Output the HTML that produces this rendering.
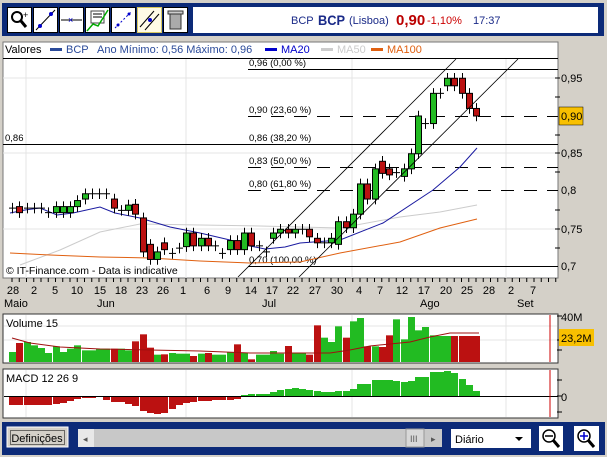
<!DOCTYPE html>
<html><head><meta charset="utf-8"><style>
body{margin:0;width:607px;height:457px;background:#d4d0c8;font-family:"Liberation Sans",sans-serif;overflow:hidden;position:relative}
.a{position:absolute}
</style></head><body>
<svg class="a" style="left:0;top:0" width="607" height="457" xmlns="http://www.w3.org/2000/svg" font-family="Liberation Sans, sans-serif" font-size="11">
<rect x="2" y="3" width="602" height="33" fill="#0c2a78"/>
<g fill="#fff" stroke="#000" stroke-width="1">
<rect x="7.5" y="7.5" width="24" height="25"/><rect x="33.5" y="7.5" width="24" height="25"/><rect x="59.5" y="7.5" width="24" height="25"/><rect x="85.5" y="7.5" width="24" height="25"/><rect x="111.5" y="7.5" width="24" height="25"/><rect x="137.5" y="7.5" width="24" height="25" fill="#fffbe6" stroke="#d8c860"/><rect x="163.5" y="7.5" width="24" height="25"/>
</g>
<g stroke="#000" fill="none">
<circle cx="17" cy="17" r="5" stroke-width="2"/><line x1="21" y1="21" x2="26" y2="27" stroke-width="3"/><text x="23" y="18" font-size="9" stroke="none" fill="#000">+</text>
<line x1="36" y1="30" x2="55" y2="10"/><circle cx="40" cy="26" r="1.5" fill="#00c" stroke="#00c"/><circle cx="51" cy="14" r="1.5" fill="#00c" stroke="#00c"/>
<line x1="61" y1="20" x2="82" y2="20"/><text x="68" y="23" font-size="9" fill="#00c" stroke="none">×</text>
<rect x="91" y="11" width="13" height="12" stroke="#444"/><line x1="93" y1="14" x2="102" y2="14"/><line x1="93" y1="17" x2="102" y2="17"/><polyline points="87,31 93,24 98,26 108,10" stroke="#0a0" stroke-width="1.5"/>
<line x1="115" y1="28" x2="132" y2="11" stroke-dasharray="2,2" stroke="#00c"/><circle cx="118" cy="25" r="1.5" fill="#00c" stroke="none"/><circle cx="129" cy="14" r="1.5" fill="#00c" stroke="none"/>
<line x1="140" y1="27" x2="154" y2="11"/><line x1="145" y1="30" x2="159" y2="14"/><circle cx="150" cy="20" r="2" fill="#00c" stroke="none"/>
<rect x="170" y="14" width="11" height="15" fill="#aaa" stroke="#333"/><rect x="168" y="11" width="15" height="3" fill="#ccc" stroke="#333"/>
</g>
<rect x="193" y="7" width="405" height="26" fill="#fff"/>
<text x="291" y="24" fill="#1a2a88">BCP</text>
<text x="318" y="25" fill="#1a2a88" font-size="14" font-weight="bold" textLength="27" lengthAdjust="spacingAndGlyphs">BCP</text>
<text x="349" y="24" fill="#1a2a88">(Lisboa)</text>
<text x="396" y="25" fill="#b00" font-size="15" font-weight="bold">0,90</text>
<text x="427" y="24" fill="#c00">-1,10%</text>
<text x="473" y="24" fill="#1a2a88">17:37</text>
<rect x="3" y="42" width="555" height="236" fill="#fff" stroke="#777"/>
<line x1="3" y1="58.5" x2="558" y2="58.5" stroke="#000"/>
<text x="5" y="53" fill="#000">Valores</text>
<rect x="50" y="48" width="12" height="3" fill="#2a4a9a"/><text x="66" y="53" fill="#2a4a9a">BCP</text>
<text x="97" y="53" fill="#2a4a9a">Ano Mínimo: 0,56 Máximo: 0,96</text>
<rect x="265" y="48" width="12" height="3" fill="#00c"/><text x="281" y="53" fill="#00c">MA20</text>
<rect x="321" y="48" width="12" height="3" fill="#ccc"/><text x="337" y="53" fill="#ccc">MA50</text>
<rect x="371" y="48" width="12" height="3" fill="#e06010"/><text x="387" y="53" fill="#e06010">MA100</text>
<g stroke="#e4e4e4"><line x1="3" y1="78" x2="558" y2="78"/><line x1="3" y1="153" x2="558" y2="153"/><line x1="3" y1="229" x2="558" y2="229"/><line x1="26" y1="59" x2="26" y2="278"/><line x1="186" y1="59" x2="186" y2="278"/><line x1="352" y1="59" x2="352" y2="278"/><line x1="506" y1="59" x2="506" y2="278"/></g>
<g stroke="#000" fill="none">
<line x1="248" y1="69.5" x2="558" y2="69.5"/>
<line x1="248" y1="116.5" x2="558" y2="116.5" stroke-dasharray="13,10"/>
<line x1="3" y1="144.5" x2="558" y2="144.5"/>
<line x1="248" y1="167.5" x2="558" y2="167.5" stroke-dasharray="13,10"/>
<line x1="248" y1="190.5" x2="558" y2="190.5" stroke-dasharray="13,10"/>
<line x1="248" y1="266.5" x2="558" y2="266.5"/>
</g>
<g font-size="9.5" fill="#000">
<text x="249" y="66">0,96 (0,00 %)</text>
<text x="249" y="113">0,90 (23,60 %)</text>
<text x="249" y="141">0,86 (38,20 %)</text>
<text x="5" y="141">0,86</text>
<text x="249" y="164">0,83 (50,00 %)</text>
<text x="249" y="187">0,80 (61,80 %)</text>
<text x="249" y="263">0,70 (100,00 %)</text>
</g>
<g fill="none" stroke-width="1">
<polyline stroke="#ccc" points="20,265 60,250 100,232 140,224 200,225 260,226 300,227 340,228 400,217 440,212 477,205"/>
<polyline stroke="#e06010" points="10,253 50,255 100,257 150,258 200,261 250,263 300,262 340,253 400,242 440,228 477,219"/>
<polyline stroke="#1a1aa0" points="10,213 25,210 40,208 57,215 73,213 100,207 115,213 140,218 170,227 200,233 230,240 250,246 265,249 285,247 300,243 340,240 383,223 433,190 460,167 477,148"/>
</g>
<g id="cd"></g>
<g stroke="#000" fill="none" stroke-width="0.8"><line x1="238" y1="277" x2="456" y2="59"/><line x1="299" y1="277" x2="518" y2="59"/></g>
<text x="6" y="274" font-size="10.5" fill="#000">© IT-Finance.com - Data is indicative</text>
<g fill="#000" font-size="11"><text x="561" y="82">0,95</text><text x="561" y="157">0,85</text><text x="561" y="194">0,8</text><text x="561" y="233">0,75</text><text x="561" y="270">0,7</text></g>
<g stroke="#000"><line x1="555" y1="78" x2="560" y2="78"/><line x1="555" y1="97" x2="560" y2="97"/><line x1="555" y1="135" x2="560" y2="135"/><line x1="555" y1="153" x2="560" y2="153"/><line x1="555" y1="172" x2="560" y2="172"/><line x1="555" y1="210" x2="560" y2="210"/><line x1="555" y1="229" x2="560" y2="229"/><line x1="555" y1="248" x2="560" y2="248"/></g>
<rect x="559" y="107" width="24" height="18" fill="#f8c000" stroke="#000" stroke-width="0.5"/><text x="561" y="120" fill="#000">0,90</text>
<g id="tk" stroke="#000"></g>
<g fill="#000" font-size="11" text-anchor="middle">
<text x="13" y="294">28</text><text x="34" y="294">2</text><text x="55" y="294">5</text><text x="77" y="294">10</text><text x="100" y="294">15</text><text x="121" y="294">18</text><text x="142" y="294">23</text><text x="163" y="294">26</text><text x="183" y="294">1</text><text x="207" y="294">6</text><text x="228" y="294">9</text><text x="251" y="294">14</text><text x="272" y="294">17</text><text x="293" y="294">22</text><text x="315" y="294">27</text><text x="337" y="294">30</text><text x="359" y="294">4</text><text x="380" y="294">7</text><text x="402" y="294">12</text><text x="424" y="294">17</text><text x="446" y="294">20</text><text x="467" y="294">25</text><text x="489" y="294">28</text><text x="511" y="294">2</text><text x="533" y="294">7</text>
</g>
<g fill="#000" font-size="11"><text x="4" y="307">Maio</text><text x="97" y="307">Jun</text><text x="262" y="307">Jul</text><text x="420" y="307">Ago</text><text x="517" y="307">Set</text></g>
<rect x="3" y="314" width="555" height="49" fill="#fff" stroke="#333"/>
<g stroke="#e4e4e4"><line x1="26" y1="315" x2="26" y2="362"/><line x1="186" y1="315" x2="186" y2="362"/><line x1="352" y1="315" x2="352" y2="362"/><line x1="506" y1="315" x2="506" y2="362"/><line x1="4" y1="340" x2="557" y2="340"/><line x1="4" y1="326" x2="557" y2="326"/></g>
<g id="vol"></g>
<polyline fill="none" stroke="#a01010" points="12,338 30,343 60,347 100,349 150,350 200,351 250,353 290,353 330,353 350,350 370,346 390,344 410,342 430,337 450,333 470,333 479,333"/>
<line x1="550" y1="315" x2="550" y2="362" stroke="#c00"/>
<text x="6" y="327" fill="#000">Volume 15</text>
<g stroke="#000"><line x1="557" y1="316" x2="562" y2="316"/><line x1="557" y1="340" x2="562" y2="340"/><line x1="557" y1="350" x2="562" y2="350"/></g>
<text x="561" y="321" fill="#000">40M</text>
<rect x="559" y="329" width="35" height="17" fill="#f8c000"/><text x="561" y="342" fill="#000">23,2M</text>
<rect x="3" y="369" width="555" height="49" fill="#fff" stroke="#333"/>
<g stroke="#e4e4e4"><line x1="26" y1="370" x2="26" y2="417"/><line x1="186" y1="370" x2="186" y2="417"/><line x1="352" y1="370" x2="352" y2="417"/><line x1="506" y1="370" x2="506" y2="417"/></g>
<g id="mc"></g>
<line x1="4" y1="396.5" x2="558" y2="396.5" stroke="#000"/>
<line x1="550" y1="370" x2="550" y2="417" stroke="#c00"/>
<text x="6" y="382" fill="#000">MACD 12 26 9</text>
<g stroke="#000"><line x1="557" y1="380" x2="562" y2="380"/><line x1="557" y1="396" x2="562" y2="396"/><line x1="557" y1="412" x2="562" y2="412"/></g>
<text x="561" y="401" fill="#000">0</text>
<rect x="2" y="422" width="603" height="33" fill="#0c2a78"/>
<rect x="7" y="427" width="61" height="20" fill="#d4d0c8" stroke="#fff"/><rect x="10.5" y="430.5" width="54" height="14" fill="none" stroke="#000" stroke-dasharray="1,1"/>
<text x="37" y="442" font-size="11" text-anchor="middle" fill="#000">Definições</text>
<rect x="78" y="429" width="364" height="18" fill="#c8c8c8"/><rect x="78" y="429" width="16" height="18" fill="#e8e8e8"/><text x="83" y="442" font-size="9" fill="#555">◂</text>
<rect x="406" y="429" width="18" height="18" fill="#d8d8d8" stroke="#999"/><text x="410" y="442" font-size="9" fill="#555">III</text><text x="431" y="442" font-size="9" fill="#555">▸</text>
<rect x="451" y="429" width="80" height="19" fill="#fff"/><text x="455" y="443" fill="#000">Diário</text><path d="M515,437 h8 l-4,4z" fill="#000"/>
<rect x="539" y="426" width="24" height="25" fill="#fff"/><circle cx="549" cy="436" r="6" fill="#fff" stroke="#000" stroke-width="1.5"/><line x1="545" y1="436" x2="553" y2="436" stroke="#000" stroke-width="1.5"/><line x1="553" y1="440" x2="559" y2="447" stroke="#000" stroke-width="3"/>
<rect x="574" y="426" width="25" height="25" fill="#fff"/><circle cx="584" cy="436" r="6" fill="#fff" stroke="#000" stroke-width="1.5"/><line x1="580" y1="436" x2="588" y2="436" stroke="#00c" stroke-width="1.5"/><line x1="584" y1="432" x2="584" y2="440" stroke="#00c" stroke-width="1.5"/><line x1="588" y1="440" x2="594" y2="447" stroke="#000" stroke-width="3"/>
</svg>
<script>
var NS="http://www.w3.org/2000/svg";
function el(p,t,a){var e=document.createElementNS(NS,t);for(var k in a)e.setAttribute(k,a[k]);p.appendChild(e);return e;}
function Y(p){return 116-(p-0.90)*755;}
var D=[[.778,.778],[.78,.772],[.778,.778],[.778,.778],[.778,.778],[.772,.772],[.772,.78],[.772,.78],[.772,.78],[.78,.788],[.79,.797],[.797,.797],[.797,.797],[.797,.797],[.79,.778],[.775,.775],[.775,.782],[.783,.77],[.765,.72],[.73,.71],[.71,.72],[.732,.723],[.718,.718],[.725,.725],[.727,.745],[.745,.728],[.728,.738],[.738,.728],[.728,.728],[.718,.718],[.723,.735],[.735,.723],[.723,.745],[.745,.728],[.728,.728],[.72,.72],[.738,.745],[.745,.75],[.75,.745],[.745,.75],[.75,.75],[.75,.74],[.738,.732],[.732,.732],[.732,.738],[.73,.76],[.76,.752],[.752,.77],[.77,.81],[.81,.79],[.79,.83],[.84,.824],[.83,.822],[.825,.825],[.82,.83],[.83,.85],[.85,.9],[.89,.89],[.89,.93],[.93,.93],[.94,.95],[.95,.94],[.95,.93],[.93,.91],[.91,.90]];
var cd=document.getElementById("cd");
D.forEach(function(d,i){var x=Math.round(12+i*7.25)+0.5,o=d[0],c=d[1],hi=Math.max(o,c)+.007,lo=Math.min(o,c)-.007;
el(cd,"line",{x1:x,x2:x,y1:Y(hi),y2:Y(lo),stroke:"#000"});
if(Math.abs(o-c)<.001){el(cd,"line",{x1:x-3.5,x2:x+3.5,y1:Y(o),y2:Y(o),stroke:"#000"});}
else el(cd,"rect",{x:x-3,y:Y(Math.max(o,c)),width:6,height:Math.abs(o-c)*755,fill:c>o?"#22bb22":"#bb1111",stroke:"#000","stroke-width":1});});
var tk=document.getElementById("tk");for(var i=0;i<76;i++){var x=12+i*7.25;if(x>556)break;el(tk,"line",{x1:x,x2:x,y1:278,y2:282});}
var V=[125,98,95,105,113,128,108,125,115,105,120,120,115,115,115,115,120,93,72,112,133,132,128,130,130,137,130,128,133,133,125,102,127,147,133,133,122,130,107,127,127,133,45,82,95,48,82,33,23,108,108,110,75,27,87,20,60,50,75,77,77,77,77,77,77];
var vg=document.getElementById("vol");
V.forEach(function(t,i){if(i>=D.length)return;var x=Math.round(12+i*7.25),h=(155-t)/3;var d=D[i];var g=d[1]>=d[0];el(vg,"rect",{x:x-3,y:362-h,width:7,height:h,fill:g?"#22bb22":"#bb1111"});});
var M=[-8,-8,-8,-8,-8,-8,-7,-6,-4,-2,-1,-1,0,-3,-5,-5,-7,-9,-14,-16,-17,-16,-12,-8,-6,-5,-4,-4,-3,-3,-3,-2,1,2,2,2,4,6,7,8,7,6,5,4,4,5,5,7,12,12,16,16,16,15,14,15,19,19,24,24,25,23,17,11,5];
var mc=document.getElementById("mc");
M.forEach(function(v,i){var x=Math.round(12+i*7.25),h=Math.abs(v);el(mc,"rect",{x:x-3,y:v>0?396-h:397,width:7,height:h,fill:v>0?"#22bb22":"#bb1111"});});
</script>
</body></html>
